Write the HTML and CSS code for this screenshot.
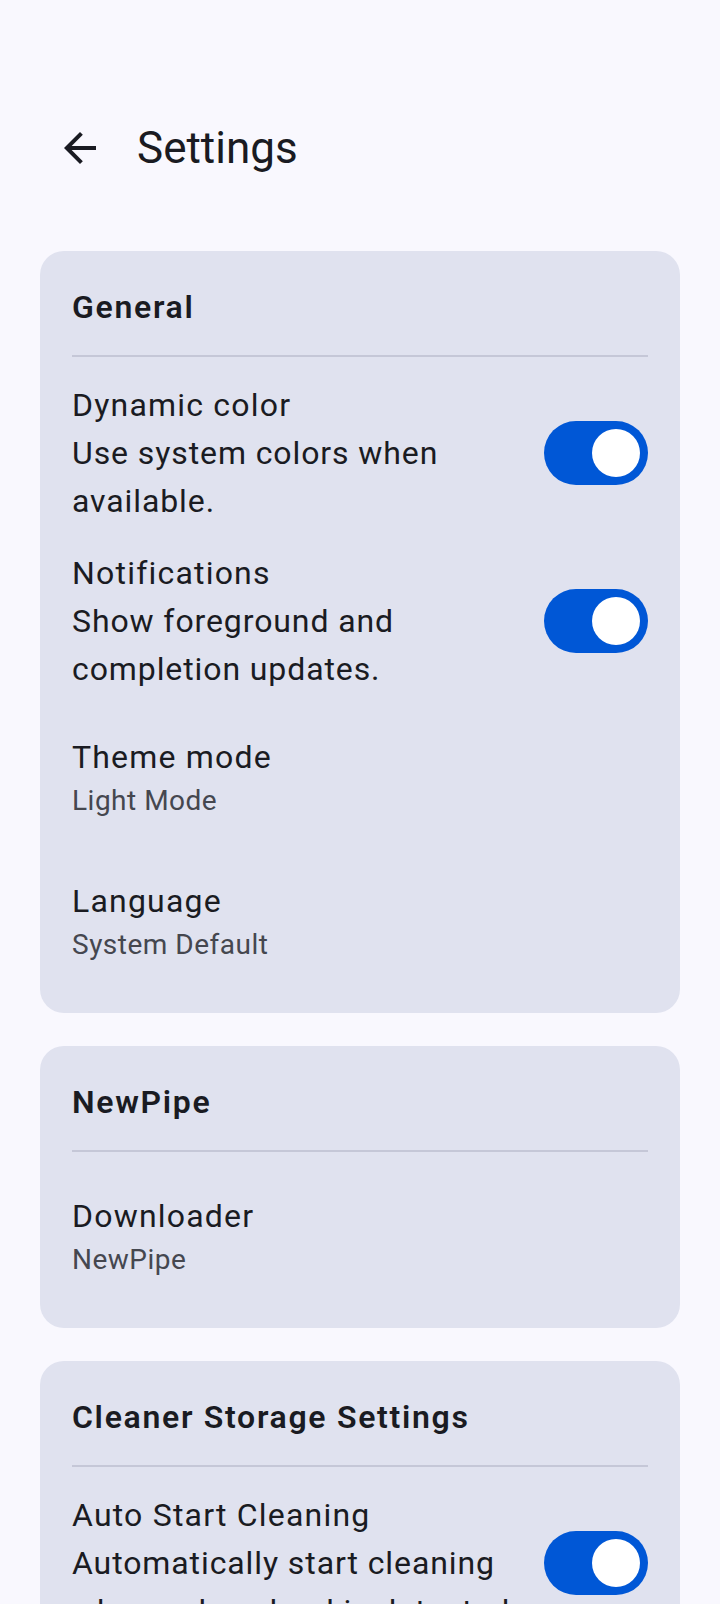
FILE: index.html
```html
<!DOCTYPE html>
<html lang="en">
<head>
  <meta charset="UTF-8">
  <meta name="viewport" content="width=device-width, initial-scale=1.0">
  <title>Settings</title>
  <link rel="stylesheet" href="styles.css">
</head>
<body>
  <div class="screen">
    <header class="appbar">
      <button class="back-btn" aria-label="Back">
        <svg viewBox="0 0 24 24" width="48" height="48"><path d="M20 11H7.83l5.59-5.59L12 4l-8 8 8 8 1.41-1.41L7.83 13H20v-2z" fill="#1a1b22"/></svg>
      </button>
      <h1 class="appbar-title">Settings</h1>
    </header>

    <main class="content">
      <section class="card">
        <h2 class="card-title">General</h2>
        <div class="divider"></div>

        <div class="switch-row">
          <div class="row-text">
            <div class="row-title">Dynamic color</div>
            <div class="row-desc">Use system colors when available.</div>
          </div>
          <div class="switch on"><span class="thumb"></span></div>
        </div>

        <div class="switch-row">
          <div class="row-text">
            <div class="row-title">Notifications</div>
            <div class="row-desc">Show foreground and completion updates.</div>
          </div>
          <div class="switch on"><span class="thumb"></span></div>
        </div>

        <div class="list-item">
          <div class="row-title">Theme mode</div>
          <div class="row-value">Light Mode</div>
        </div>

        <div class="list-item">
          <div class="row-title">Language</div>
          <div class="row-value">System Default</div>
        </div>
      </section>

      <section class="card">
        <h2 class="card-title">NewPipe</h2>
        <div class="divider"></div>

        <div class="list-item">
          <div class="row-title">Downloader</div>
          <div class="row-value">NewPipe</div>
        </div>
      </section>

      <section class="card">
        <h2 class="card-title">Cleaner Storage Settings</h2>
        <div class="divider"></div>

        <div class="switch-row">
          <div class="row-text">
            <div class="row-title">Auto Start Cleaning</div>
            <div class="row-desc">Automatically start cleaning when a download is detected.</div>
          </div>
          <div class="switch on"><span class="thumb"></span></div>
        </div>
      </section>
    </main>
  </div>
</body>
</html>
```

FILE: styles.css
```css
body {
  margin: 0;
  font-family: Roboto, "Noto Sans", sans-serif;
  background: #f9f8fe;
  color: #1a1b22;
}
.screen {
  height: 100vh;
  overflow: hidden;
}
.appbar {
  display: flex;
  align-items: center;
  height: 128px;
  margin-top: 84px;
  padding-left: 56px;
}
.back-btn {
  width: 48px;
  height: 48px;
  padding: 0;
  border: none;
  background: none;
  cursor: pointer;
}
.back-btn svg { display: block; }
.appbar-title {
  margin: 0 0 0 33px;
  font-size: 44px;
  font-weight: 400;
  line-height: 56px;
}
.content {
  padding-top: 39px;
}
.card {
  margin: 0 40px 33px;
  padding: 32px 32px 20px;
  background: #e0e2ef;
  border-radius: 24px;
}
.card-title {
  margin: 0;
  font-size: 32px;
  font-weight: 600;
  line-height: 48px;
  letter-spacing: 1.7px;
}
.divider {
  height: 2px;
  margin: 24px 0 12px;
  background: #c5c7d7;
}
.switch-row {
  display: flex;
  align-items: center;
  gap: 16px;
  padding: 12px 0;
}
.row-text {
  flex: 1;
  min-width: 0;
}
.row-title {
  font-size: 32px;
  line-height: 48px;
  letter-spacing: 1.2px;
}
.row-desc {
  font-size: 32px;
  line-height: 48px;
  letter-spacing: 0.9px;
}
.list-item {
  display: flex;
  flex-direction: column;
  justify-content: center;
  height: 144px;
}
.row-value {
  font-size: 28px;
  line-height: 40px;
  letter-spacing: 0.5px;
  color: #45474f;
}
.switch {
  flex-shrink: 0;
  display: flex;
  align-items: center;
  justify-content: flex-end;
  box-sizing: border-box;
  width: 104px;
  height: 64px;
  padding: 0 8px;
  border-radius: 32px;
  background: #0057d6;
}
.thumb {
  width: 48px;
  height: 48px;
  border-radius: 50%;
  background: #fff;
}
```
